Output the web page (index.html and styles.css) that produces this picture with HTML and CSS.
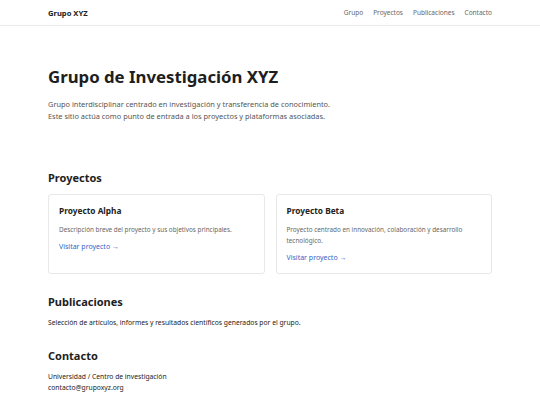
FILE: index.html
```html
<!DOCTYPE html>
<html lang="es">
<head>
<meta charset="utf-8">
<title>Grupo XYZ</title>
<link rel="stylesheet" href="styles.css">
</head>
<body>
<header class="site-header">
  <div class="container header-inner">
    <div class="brand">Grupo XYZ</div>
    <nav class="nav">
      <a href="#">Grupo</a>
      <a href="#">Proyectos</a>
      <a href="#">Publicaciones</a>
      <a href="#">Contacto</a>
    </nav>
  </div>
</header>
<main class="container">
  <section class="hero">
    <h1>Grupo de Investigación XYZ</h1>
    <p>Grupo interdisciplinar centrado en investigación y transferencia de conocimiento.<br>Este sitio actúa como punto de entrada a los proyectos y plataformas asociadas.</p>
  </section>
  <section class="section">
    <h2>Proyectos</h2>
    <div class="cards">
      <div class="card">
        <h3>Proyecto Alpha</h3>
        <p>Descripción breve del proyecto y sus objetivos principales.</p>
        <a href="#" class="link">Visitar proyecto →</a>
      </div>
      <div class="card">
        <h3>Proyecto Beta</h3>
        <p>Proyecto centrado en innovación, colaboración y desarrollo tecnológico.</p>
        <a href="#" class="link">Visitar proyecto →</a>
      </div>
    </div>
  </section>
  <section class="section">
    <h2>Publicaciones</h2>
    <p class="text">Selección de artículos, informes y resultados científicos generados por el grupo.</p>
  </section>
  <section class="section">
    <h2>Contacto</h2>
    <p class="text">Universidad / Centro de investigación<br>contacto@grupoxyz.org</p>
  </section>
</main>
</body>
</html>
```

FILE: styles.css
```css
* { box-sizing: border-box; }
html, body { margin: 0; padding: 0; }
body {
  font-family: "Noto Sans", "Open Sans", sans-serif;
  color: #1a1a1a;
  background: #fff;
}
.container { width: 444px; margin: 0 auto; }
.site-header { border-bottom: 1px solid #ececec; }
.header-inner {
  display: flex;
  justify-content: space-between;
  align-items: center;
  height: 25px;
}
.brand { font-weight: 700; font-size: 7.6px; color: #222; }
.nav { display: flex; gap: 10px; }
.nav a { font-size: 6.5px; color: #666; text-decoration: none; }
.hero { padding-top: 39.5px; }
.hero h1 { margin: 0 0 10px; font-size: 16.8px; font-weight: 700; color: #1e1e1e; line-height: 22px; }
.hero p { margin: 0; font-size: 7.4px; line-height: 12px; color: #555; }
.hero + .section { margin-top: 48px; }
.section { margin-bottom: 20px; }
.section h2 { margin: 0 0 8px; font-size: 11px; font-weight: 700; line-height: 15px; color: #1e1e1e; }
.cards { display: grid; grid-template-columns: 1fr 1fr; gap: 11px; margin-top: 9px; }
.card {
  border: 1px solid #e8e8e8;
  border-radius: 3px;
  padding: 10px;
  font-size: 6.35px;
  line-height: 11px;
}
.card h3 { margin: 0 0 7px; font-size: 8.3px; font-weight: 700; line-height: 12px; color: #222; }
.card p { margin: 0 0 6px; font-size: 6.35px; line-height: 11px; color: #666; }
.link { display: block; font-size: 7px; line-height: 11px; color: #3565c8; text-decoration: none; }
.text { margin: 0; font-size: 6.75px; line-height: 11px; color: #222; }
```
